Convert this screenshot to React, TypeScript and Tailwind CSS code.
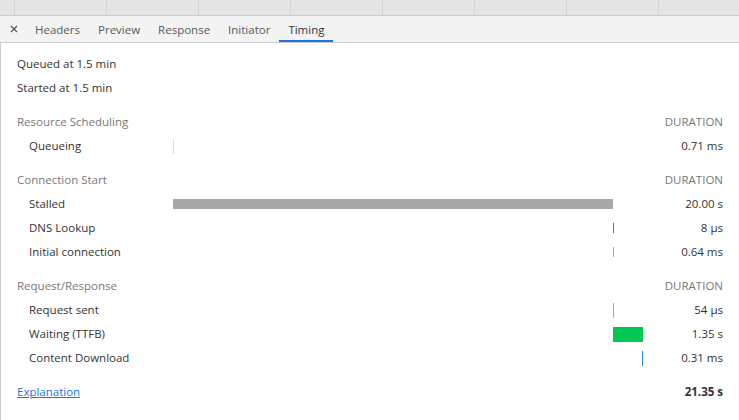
import React from 'react';

interface TimingRow {
  label: string;
  start: number; // seconds from request start
  duration: number; // seconds
  text: string;
  kind: 'line' | 'bar';
  color: string;
  tall?: boolean;
}

interface Section {
  title: string;
  rows: TimingRow[];
}

const TOTAL = 21.35;
const TRACK = 470;

const sections: Section[] = [
  {
    title: 'Resource Scheduling',
    rows: [{ label: 'Queueing', start: 0, duration: 0.00071, text: '0.71 ms', kind: 'line', color: '#dcdcdc', tall: true }],
  },
  {
    title: 'Connection Start',
    rows: [
      { label: 'Stalled', start: 0, duration: 20, text: '20.00 s', kind: 'bar', color: '#a8a8a8' },
      { label: 'DNS Lookup', start: 20, duration: 0.000008, text: '8 µs', kind: 'line', color: '#1f9385' },
      { label: 'Initial connection', start: 20, duration: 0.00064, text: '0.64 ms', kind: 'line', color: '#f0a030' },
    ],
  },
  {
    title: 'Request/Response',
    rows: [
      { label: 'Request sent', start: 20, duration: 0.000054, text: '54 µs', kind: 'line', color: '#a3b0bb', tall: true },
      { label: 'Waiting (TTFB)', start: 20, duration: 1.35, text: '1.35 s', kind: 'bar', color: '#00c853', tall: true },
      { label: 'Content Download', start: 21.35, duration: 0.00031, text: '0.31 ms', kind: 'line', color: '#2a8ee0', tall: true },
    ],
  },
];

const tabs = ['Headers', 'Preview', 'Response', 'Initiator', 'Timing'];

const font = { fontFamily: '"Open Sans", "Noto Sans", sans-serif' };

const Bar = ({ row }: { row: TimingRow }) => {
  const left = Math.round((row.start / TOTAL) * TRACK);
  const width = row.kind === 'line' ? 1 : Math.max(1, Math.round((row.duration / TOTAL) * TRACK));
  return (
    <div className="relative h-full w-[470px]">
      <div
        className={`absolute ${row.tall ? 'top-[5px] h-[15px]' : 'top-[7px] h-[10px]'}`}
        style={{ left: Math.min(left, TRACK - 1), width, backgroundColor: row.color }}
      />
    </div>
  );
};

const App = () => {
  return (
    <div className="w-[739px] h-[420px] overflow-hidden bg-white text-[11.5px] text-[#333]" style={font}>
      {/* column strip */}
      <div className="flex h-[16px] bg-[#e5e5e5] border-b border-[#cccccc]">
        <div className="w-[14px] shrink-0" />
        {Array.from({ length: 8 }).map((_, i) => (
          <div key={i} className="w-[92px] shrink-0 border-l border-[#d4d4d4]" />
        ))}
      </div>

      {/* tabs */}
      <div className="flex items-stretch h-[27px] bg-[#f3f3f3] border-b border-[#cccccc]">
        <div className="w-[26px] pl-[2px] flex items-center justify-center">
          <svg width="8" height="8" viewBox="0 0 8 8">
            <path d="M1 1 L7 7 M7 1 L1 7" stroke="#5a5a5a" strokeWidth="1.4" />
          </svg>
        </div>
        {tabs.map((t) => (
          <div
            key={t}
            className={`pl-[9px] pr-[9px] flex items-center pt-[1px] ${
              t === 'Timing' ? 'text-[#333] border-b-2 border-[#1a73e8] pt-[3px]' : 'text-[#5a5a5a]'
            }`}
          >
            {t}
          </div>
        ))}
      </div>

      {/* content */}
      <div className="border-l border-[#cccccc] h-full pt-[9px] pl-[16px] pr-[16px]">
        <div className="h-[24px] flex items-center">Queued at 1.5 min</div>
        <div className="h-[24px] flex items-center">Started at 1.5 min</div>

        {sections.map((s) => (
          <div key={s.title} className="mt-[10px]">
            <div className="h-[24px] flex items-center justify-between text-[#777]">
              <span>{s.title}</span>
              <span>DURATION</span>
            </div>
            {s.rows.map((r) => (
              <div key={r.label} className="h-[24px] flex items-center">
                <div className="w-[156px] shrink-0 pl-[12px]">{r.label}</div>
                <Bar row={r} />
                <div className="flex-1 text-right">{r.text}</div>
              </div>
            ))}
          </div>
        ))}

        <div className="mt-[10px] h-[24px] flex items-center justify-between">
          <a href="#" className="text-[#1a73e8] underline">Explanation</a>
          <span className="font-bold">21.35 s</span>
        </div>
      </div>
    </div>
  );
};

export default App;
